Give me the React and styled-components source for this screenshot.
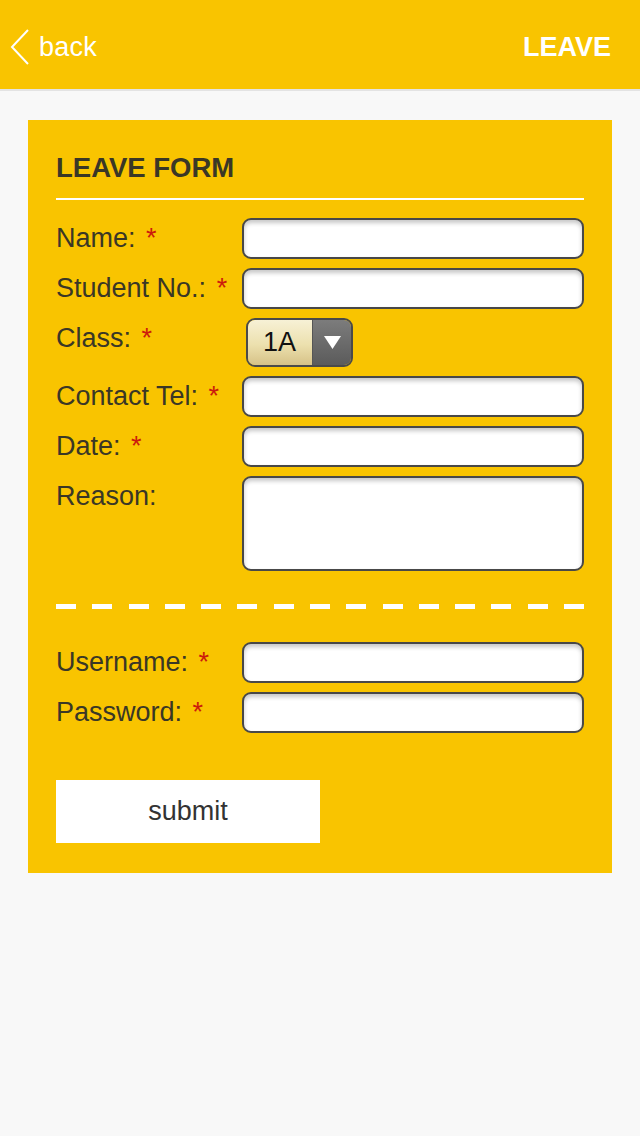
import React from "react";
import styled, { createGlobalStyle } from "styled-components";

const GlobalStyle = createGlobalStyle`
  html, body {
    margin: 0;
    padding: 0;
    background: #f8f8f8;
    font-family: "Liberation Sans", Arial, Helvetica, sans-serif;
  }
  * { box-sizing: border-box; }
`;

const Page = styled.div`
  width: 640px;
  min-height: 1136px;
  background: #f8f8f8;
`;

const Header = styled.header`
  height: 91px;
  background: #f9c400;
  border-bottom: 2px solid #e3e3e3;
  display: flex;
  align-items: center;
  justify-content: space-between;
  padding: 5px 29px 0 10px;
  color: #fff;
`;

const Back = styled.div`
  display: flex;
  align-items: center;
  gap: 9px;
  font-size: 27px;
  letter-spacing: 0.2px;
`;

const Title = styled.div`
  font-size: 27px;
  font-weight: bold;
`;

const Card = styled.main`
  margin: 29px 28px 0;
  background: #f9c400;
  padding: 32px 28px 30px;
`;

const FormTitle = styled.h1`
  margin: 0 0 18px;
  font-size: 27.5px;
  line-height: 32px;
  font-weight: bold;
  color: #3a3726;
  padding-bottom: 14px;
  border-bottom: 2px solid #fff;
`;

const Fields = styled.div`
  display: grid;
  grid-template-columns: 186px 342px;
  row-gap: 9px;
  align-items: start;
`;

const Label = styled.label`
  font-size: 27px;
  line-height: 41px;
  color: #3a3726;
  white-space: nowrap;
`;

const Star = styled.span`
  color: #cc1a0c;
  margin-left: 3px;
`;

const Input = styled.input`
  display: block;
  width: 100%;
  height: ${(p) => p.$h || 41}px;
  border: 2px solid #484848;
  border-radius: 9px;
  background: #fff;
  box-shadow: inset 0 3px 4px rgba(0, 0, 0, 0.22);
  font-size: 24px;
  padding: 0 10px;
  outline: none;
`;

const TextArea = styled(Input).attrs({ as: "textarea" })`
  resize: none;
  padding: 8px 10px;
`;

const Select = styled.div`
  margin-left: 4px;
  width: 107px;
  height: 49px;
  border: 2px solid #4a4a4a;
  border-radius: 9px;
  overflow: hidden;
  display: flex;
`;

const SelectValue = styled.div`
  width: 64px;
  background: linear-gradient(#f7f1d6, #ece0ae 55%, #d6c287);
  font-size: 27px;
  line-height: 45px;
  color: #111;
  padding-left: 15px;
`;

const SelectArrow = styled.div`
  flex: 1;
  background: linear-gradient(#7c7c7c, #5b5b5b);
  border-left: 1px solid #555;
  display: flex;
  align-items: center;
  justify-content: center;
`;

const Dashes = styled.div`
  height: 5px;
  margin: 33px 0;
  background: repeating-linear-gradient(
    90deg,
    #fff 0 20px,
    transparent 20px 36.29px
  );
`;

const Submit = styled.button`
  margin-top: 47px;
  width: 264px;
  height: 63px;
  border: none;
  background: #fff;
  font-family: inherit;
  font-size: 27px;
  color: #333;
  display: block;
`;

const Field = ({ label, required, children }) => (
  <>
    <Label>
      {label}
      {required && (
        <>
          {" "}
          <Star>*</Star>
        </>
      )}
    </Label>
    {children}
  </>
);

export default function App() {
  return (
    <Page>
      <GlobalStyle />
      <Header>
        <Back>
          <svg width="20" height="36" viewBox="0 0 20 36">
            <path d="M18 1 L2 18 L18 35" fill="none" stroke="#fff" strokeWidth="2" />
          </svg>
          back
        </Back>
        <Title>LEAVE</Title>
      </Header>

      <Card>
        <FormTitle>LEAVE FORM</FormTitle>
        <Fields>
          <Field label="Name:" required>
            <Input />
          </Field>
          <Field label="Student No.:" required>
            <Input />
          </Field>
          <Field label="Class:" required>
            <Select>
              <SelectValue>1A</SelectValue>
              <SelectArrow>
                <svg width="17" height="13" viewBox="0 0 17 13">
                  <path d="M0 0 H17 L8.5 13 Z" fill="#fff" />
                </svg>
              </SelectArrow>
            </Select>
          </Field>
          <Field label="Contact Tel:" required>
            <Input />
          </Field>
          <Field label="Date:" required>
            <Input />
          </Field>
          <Field label="Reason:">
            <TextArea $h={95} />
          </Field>
        </Fields>

        <Dashes />

        <Fields>
          <Field label="Username:" required>
            <Input />
          </Field>
          <Field label="Password:" required>
            <Input type="password" />
          </Field>
        </Fields>

        <Submit>submit</Submit>
      </Card>
    </Page>
  );
}
